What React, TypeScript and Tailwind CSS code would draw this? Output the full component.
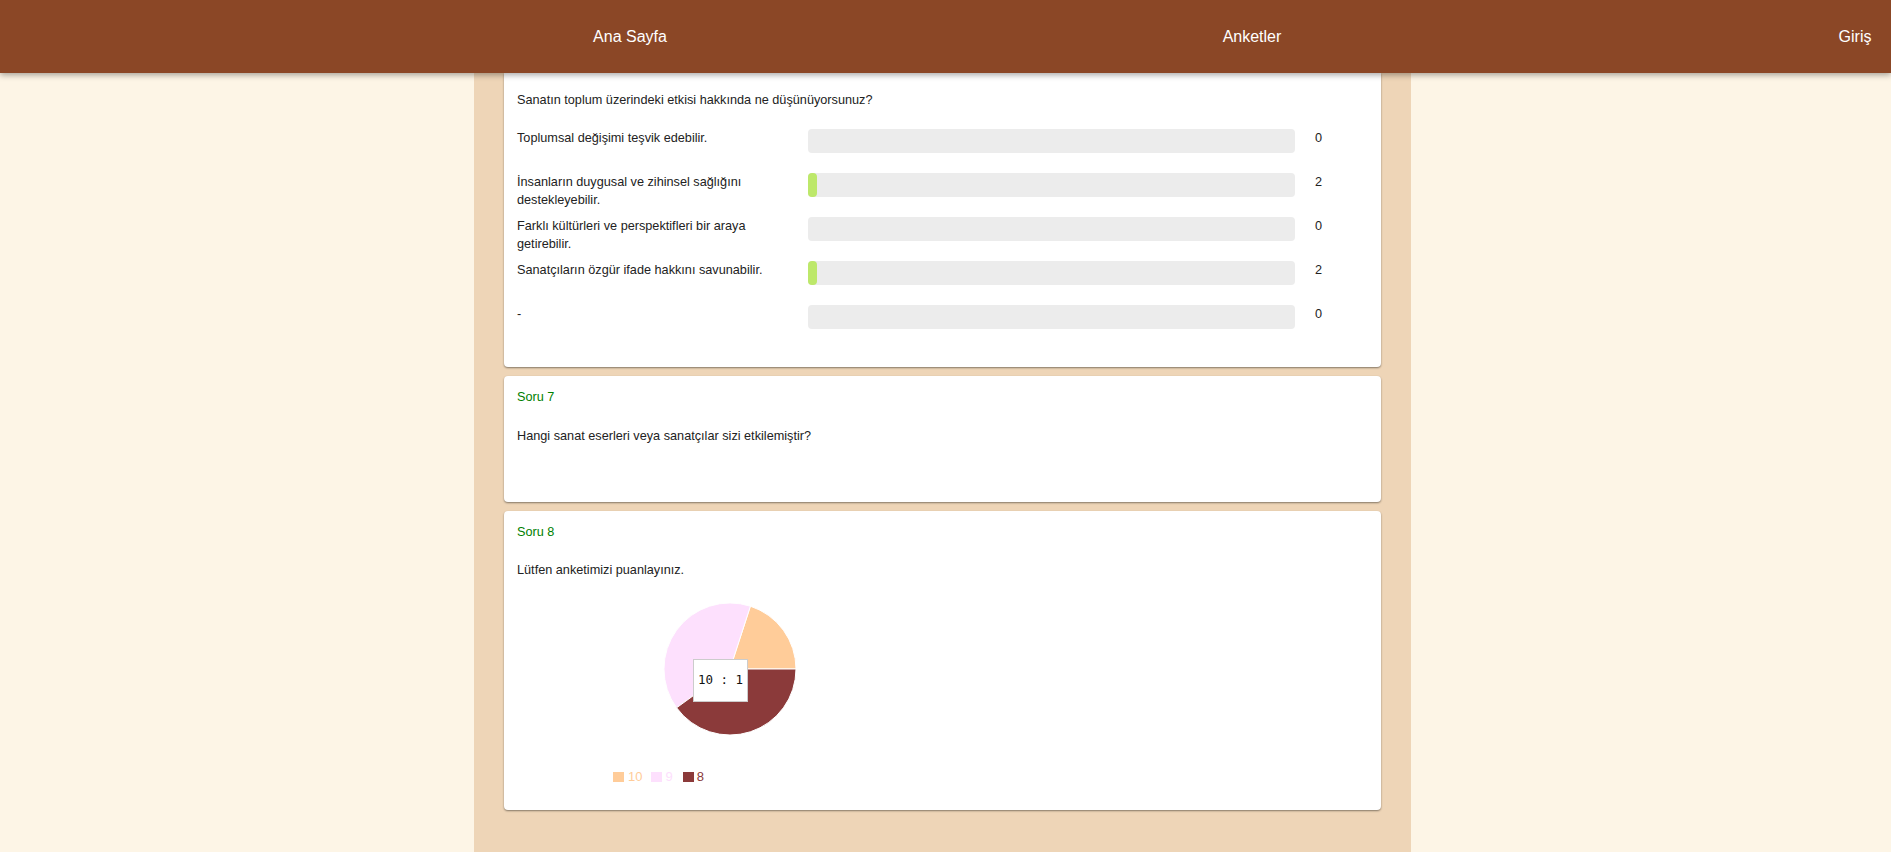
import React from "react";

const rows = [
  { label: "Toplumsal değişimi teşvik edebilir.", value: 0 },
  { label: "İnsanların duygusal ve zihinsel sağlığını destekleyebilir.", value: 2 },
  { label: "Farklı kültürleri ve perspektifleri bir araya getirebilir.", value: 0 },
  { label: "Sanatçıların özgür ifade hakkını savunabilir.", value: 2 },
  { label: "-", value: 0 },
];

function ResultRow({ label, value }: { label: string; value: number }) {
  return (
    <div className="flex h-[44px] items-start">
      <div className="w-[291px] shrink-0 pr-[20px] leading-[18px]">{label}</div>
      <div className="h-[24px] w-[487px] shrink-0 rounded-[4px] bg-[#ececec]">
        {value > 0 && <div className="h-[24px] w-[9px] rounded-[4px] bg-[#bde86a]" />}
      </div>
      <div className="ml-[20px] leading-[18px]">{value}</div>
    </div>
  );
}

function Pie() {
  return (
    <div className="relative h-[205px] w-[430px]">
      <svg width="430" height="160" viewBox="0 0 430 160" className="block">
        <path d="M213,80 L279,80 A66,66 0 0,0 233.4,17.2 Z" fill="#ffcc99" stroke="#ffffff" strokeWidth="1" />
        <path d="M213,80 L233.4,17.2 A66,66 0 0,0 159.6,118.8 Z" fill="#fde0fd" stroke="#ffffff" strokeWidth="1" />
        <path d="M213,80 L159.6,118.8 A66,66 0 0,0 279,80 Z" fill="#8b3a3a" stroke="#ffffff" strokeWidth="1" />
      </svg>
      <div className="mt-[19px] flex items-center pl-[96px] text-[13px] leading-[18px]">
        <span className="h-[10px] w-[11px] bg-[#ffcc99]" />
        <span className="ml-[4px] text-[#ffcc99]">10</span>
        <span className="ml-[9px] h-[10px] w-[11px] bg-[#fde0fd]" />
        <span className="ml-[3px] text-[#fde0fd]">9</span>
        <span className="ml-[10px] h-[10px] w-[11px] bg-[#8b3a3a]" />
        <span className="ml-[3px] text-[#8b3a3a]">8</span>
      </div>
      <div
        className="absolute left-[176px] top-[70px] flex h-[43px] w-[55px] items-center justify-center border border-[#cccccc] bg-white text-[12.5px] text-[#111]"
        style={{ fontFamily: '"DejaVu Sans Mono", "Liberation Mono", monospace' }}
      >
        10 : 1
      </div>
    </div>
  );
}

export default function App() {
  return (
    <div
      className="min-h-screen bg-[#fdf5e6] text-[12.7px] text-[#222222]"
      style={{ fontFamily: '"Liberation Sans", Arial, sans-serif' }}
    >
      <header className="relative z-10 flex h-[73px] items-center bg-[#8b4726] pl-[530px] text-[16px] text-white shadow-[0_2px_6px_rgba(0,0,0,0.35)]">
        <div className="w-[200px] text-center">Ana Sayfa</div>
        <div className="ml-[422px] w-[200px] text-center">Anketler</div>
        <div className="ml-[468px] w-[70px] text-center">Giriş</div>
      </header>
      <main className="ml-[474px] flex min-h-[779px] w-[937px] flex-col gap-[9px] bg-[#eed5b7] px-[30px] pb-[40px]">
        <section className="rounded-b-[4px] bg-white px-[13px] pb-[18px] pt-[18px] shadow-[0_1px_2px_rgba(0,0,0,0.45)]">
          <div className="leading-[18px]">Sanatın toplum üzerindeki etkisi hakkında ne düşünüyorsunuz?</div>
          <div className="mt-[20px]">
            {rows.map((r) => (
              <ResultRow key={r.label} label={r.label} value={r.value} />
            ))}
          </div>
        </section>
        <section className="h-[126px] rounded-[4px] bg-white px-[13px] pt-[12px] shadow-[0_1px_2px_rgba(0,0,0,0.45)]">
          <div className="leading-[18px] text-[#008000]">Soru 7</div>
          <div className="mt-[21px] leading-[18px]">Hangi sanat eserleri veya sanatçılar sizi etkilemiştir?</div>
        </section>
        <section className="h-[299px] rounded-[4px] bg-white px-[13px] pt-[12px] shadow-[0_1px_2px_rgba(0,0,0,0.45)]">
          <div className="leading-[18px] text-[#008000]">Soru 8</div>
          <div className="mt-[20px] leading-[18px]">Lütfen anketimizi puanlayınız.</div>
          <div className="mt-[10px]">
            <Pie />
          </div>
        </section>
      </main>
    </div>
  );
}
